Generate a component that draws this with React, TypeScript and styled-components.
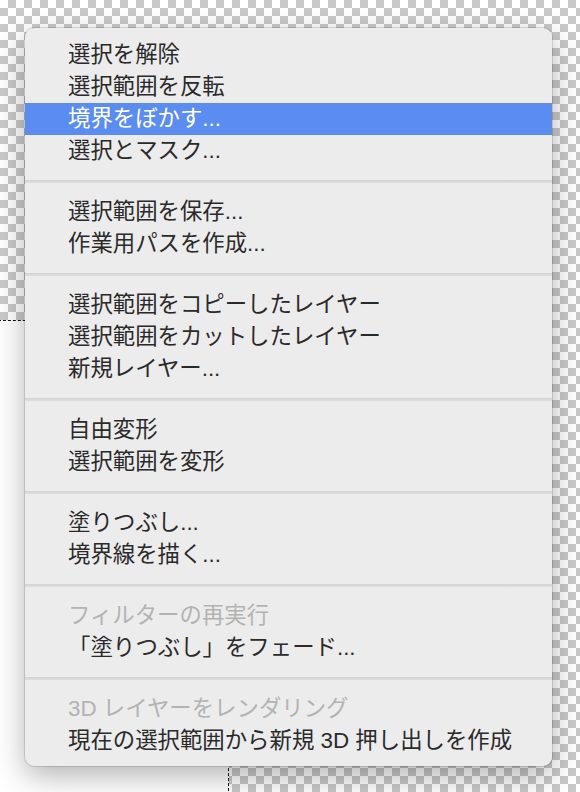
import styled, { createGlobalStyle } from 'styled-components';

type Item = { label: string; disabled?: boolean; active?: boolean };

const sections: Item[][] = [
  [
    { label: '選択を解除' },
    { label: '選択範囲を反転' },
    { label: '境界をぼかす...', active: true },
    { label: '選択とマスク...' },
  ],
  [{ label: '選択範囲を保存...' }, { label: '作業用パスを作成...' }],
  [
    { label: '選択範囲をコピーしたレイヤー' },
    { label: '選択範囲をカットしたレイヤー' },
    { label: '新規レイヤー...' },
  ],
  [{ label: '自由変形' }, { label: '選択範囲を変形' }],
  [{ label: '塗りつぶし...' }, { label: '境界線を描く...' }],
  [{ label: 'フィルターの再実行', disabled: true }, { label: '「塗りつぶし」をフェード...' }],
  [{ label: '3D レイヤーをレンダリング', disabled: true }, { label: '現在の選択範囲から新規 3D 押し出しを作成' }],
];

const App = () => {
  return (
    <>
      <GlobalStyle />
      <Stage>
        {/* document area with the selection marquee */}
        <Doc />

        <Menu>
          {sections.map((items, i) => (
            <Section key={i}>
              {i > 0 && <Separator />}
              {items.map((item) => (
                <Row key={item.label} active={item.active} disabled={item.disabled}>
                  {item.label}
                </Row>
              ))}
            </Section>
          ))}
        </Menu>
      </Stage>
    </>
  );
};

export default App;

const GlobalStyle = createGlobalStyle`
  html, body {
    margin: 0;
    padding: 0;
  }
  body {
    font-family: "Liberation Sans", "Noto Sans CJK JP", sans-serif;
  }
`;

// checkerboard = transparent canvas
const Stage = styled.div`
  position: relative;
  width: 580px;
  height: 792px;
  overflow: hidden;
  background-color: #ffffff;
  background-image:
    linear-gradient(45deg, #c9c9c9 25%, transparent 25%, transparent 75%, #c9c9c9 75%),
    linear-gradient(45deg, #c9c9c9 25%, transparent 25%, transparent 75%, #c9c9c9 75%);
  background-size: 16px 16px;
  background-position: 0 0, 8px 8px;
`;

const Doc = styled.div`
  position: absolute;
  left: -2px;
  top: 320px;
  width: 230px;
  height: 480px;
  background: #ffffff;
  border-top: 1px dashed #111;
  border-right: 1px dashed #111;
`;

const Menu = styled.div`
  position: absolute;
  left: 25px;
  top: 28px;
  width: 527px;
  box-sizing: border-box;
  padding: 11px 0 9px;
  background: #ececec;
  border-radius: 9px;
  box-shadow: 0 0 0 1px rgba(0, 0, 0, 0.12), 0 10px 30px rgba(0, 0, 0, 0.3);
  display: flex;
  flex-direction: column;
`;

const Section = styled.div`
  display: flex;
  flex-direction: column;
`;

const Separator = styled.div`
  height: 29px;
  display: flex;
  align-items: center;

  &::before {
    content: '';
    display: block;
    width: 100%;
    height: 3px;
    background: linear-gradient(#d3d3d3, #dedede);
  }
`;

const Row = styled.div<{ active?: boolean; disabled?: boolean }>`
  height: 32px;
  line-height: 32px;
  padding-left: 43px;
  font-size: 22.4px;
  white-space: nowrap;
  color: ${({ active, disabled }) => (active ? '#ffffff' : disabled ? '#b3b3b3' : '#2a2a2a')};
  background: ${({ active }) => (active ? '#5a8def' : 'transparent')};
`;
